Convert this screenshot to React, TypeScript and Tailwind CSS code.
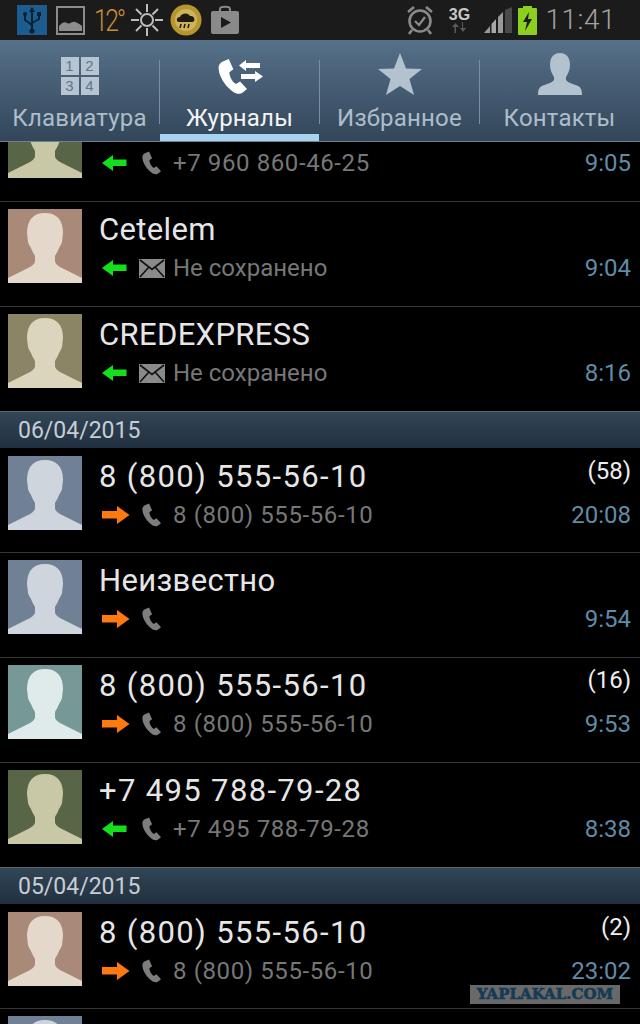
const font = "font-['Roboto',sans-serif]";

function PhoneIcon({ className, fill }: { className: string; fill: string }) {
  return (
    <svg viewBox="0 0 20 24" className={className}>
      <path
        fill={fill}
        d="M3 1.8 L7.4 0 L10.6 7 L7.8 9 C8 12.4 9.8 15.4 12.4 17.2 L15.2 15.4 L20 20.6 L16.6 23.4 C14.6 24.6 11.8 23.8 9.2 21.6 C4.6 17.8 0.8 12 0.4 6.6 C0.2 4.4 1.2 2.8 3 1.8 Z"
      />
    </svg>
  );
}

function Mail() {
  return (
    <svg viewBox="0 0 26 19" className="w-[26px] h-[19px]">
      <rect width="26" height="19" fill="#8a8a8a" />
      <path d="M1 1 L13 10.5 L25 1 M1 18 L9.5 8.5 M25 18 L16.5 8.5" stroke="#111" strokeWidth="1.6" fill="none" />
    </svg>
  );
}

function ArrowLeft() {
  return (
    <svg viewBox="0 0 26 16" className="w-[26px] h-[16px]">
      <path d="M0 8 L11 0 L11 4.5 L24.5 4.5 L24.5 11 L11 11 L11 16 Z" fill="#13e01b" />
    </svg>
  );
}

function ArrowRight() {
  return (
    <svg viewBox="0 0 28 18" className="w-[28px] h-[18px]">
      <path d="M0 5 L15 5 L15 0 L27.5 9 L15 18 L15 12.5 L0 12.5 Z" fill="#ff7a0e" />
    </svg>
  );
}

function Avatar({ bg, fg }: { bg: string; fg: string }) {
  return (
    <div className="w-[74px] h-[74px] shrink-0" style={{ background: bg }}>
      <svg viewBox="0 0 74 74" className="w-full h-full">
        <path
          fill={fg}
          d="M37 4 C49 4 55 11 55 24 L54 33 C53 36 52 37 51 39 C50 42 48 45 47 47 L47 52 C47 55 50 57 56 60 L66 65 L74 69 L74 74 L0 74 L0 69 L8 65 L18 60 C24 57 27 55 27 52 L27 47 C26 45 24 42 23 39 C22 37 21 36 20 33 L19 24 C19 11 25 4 37 4 Z"
        />
      </svg>
    </div>
  );
}

const avatars = {
  green: { bg: "#596547", fg: "#c8c8a6" },
  rose: { bg: "#a98a78", fg: "#e4d8ca" },
  olive: { bg: "#8b8465", fg: "#dcd5bd" },
  blue: { bg: "#708195", fg: "#ced5dd" },
  teal: { bg: "#769896", fg: "#dfeaea" },
};

interface ICall {
  avatar: keyof typeof avatars;
  title?: string;
  dir: "in" | "out";
  kind: "call" | "sms";
  sub?: string;
  count?: string;
  time: string;
  first?: boolean;
  last?: boolean;
}

// the phone's font has wider digits than Roboto
const isNumber = (s?: string) => /^[\d+]/.test(s ?? "");

function CallRow({ avatar, title, dir, kind, sub, count, time, first, last }: ICall) {
  return (
    <div
      className={`flex pl-2 pr-[9px] ${first ? "pt-2" : "pt-[7px]"} ${
        last ? "h-[104px]" : "h-[105px] border-b border-[#383838]"
      }`}
    >
      <Avatar {...avatars[avatar]} />
      <div className="ml-[18px] flex-1">
        <div
          className={`h-10 pt-px -ml-px leading-10 text-[31px] text-[#e6e6e6] ${
            isNumber(title) ? "tracking-[1.35px]" : "tracking-[0.35px]"
          }`}
        >
          {title}
        </div>
        <div className="h-9 mt-px flex items-center text-[24px] text-[#777]">
          <div className="w-[43px] pl-[2px]">{dir === "in" ? <ArrowLeft /> : <ArrowRight />}</div>
          {kind === "call" ? (
            <PhoneIcon className="w-[19px] h-6 -ml-px mr-[12px]" fill="#7d7d7d" />
          ) : (
            <div className="ml-[-4px] mr-[8px]">
              <Mail />
            </div>
          )}
          <span className={isNumber(sub) ? "tracking-[0.6px]" : ""}>{sub}</span>
        </div>
      </div>
      <div className="text-right">
        <div className="h-8 leading-[30px] text-[24px] text-[#eee]">{count}</div>
        <div className="mt-[9px] h-9 leading-9 text-[24px] text-[#5f8ca6]">{time}</div>
      </div>
    </div>
  );
}

function DateHeader({ date }: { date: string }) {
  return (
    <div className="h-[37px] pl-[18px] border-t border-[#5d666e] bg-gradient-to-b from-[#324656] to-[#213040] text-[23px] leading-[37px] text-[#c6ced4]">
      {date}
    </div>
  );
}

function Tab({
  label,
  active,
  children,
}: {
  label: string;
  active?: boolean;
  children: React.ReactNode;
}) {
  return (
    <div className="relative w-[159px] h-full flex flex-col items-center">
      <div className="h-[63px] pt-[13px] flex items-start justify-center">{children}</div>
      <div
        className={`text-[24px] leading-[30px] tracking-[0.2px] whitespace-nowrap ${
          active ? "text-[#f4f4f4]" : "text-[#adbdca]"
        }`}
      >
        {label}
      </div>
      {active && <div className="absolute left-0 right-0 bottom-0 h-[7px] bg-[#a6d3f0]" />}
    </div>
  );
}

const Divider = () => <div className="w-px h-[64px] mt-5 bg-[#7a90a2]" />;

function StatusBar() {
  return (
    <div className="h-10 bg-[#1b1b1b] flex items-center pl-[17px] pr-[24px]">
      {/* usb */}
      <svg viewBox="0 0 30 30" className="w-[30px] h-[30px]">
        <rect width="30" height="30" fill="#1c5c8f" />
        <path d="M15 3 L15 27 M8 10 L8 15 L15 20 M22 10 L22 14 L15 18" stroke="#0b2233" strokeWidth="2" fill="none" />
        <path d="M15 2 L18 7 L12 7 Z" fill="#0b2233" />
        <circle cx="15" cy="26" r="2.6" fill="#0b2233" />
        <circle cx="8" cy="9" r="2" fill="#0b2233" />
        <rect x="20" y="7" width="4" height="4" fill="#0b2233" />
      </svg>
      {/* gallery */}
      <svg viewBox="0 0 29 29" className="w-[29px] h-[29px] ml-[9px]">
        <rect x="1" y="1" width="27" height="27" fill="none" stroke="#8c8c8c" strokeWidth="2" />
        <path d="M3 25 L3 20 C6 17 8 15 11 17 C14 19 16 15 19 16 C22 17 24 18 26 20 L26 25 Z" fill="#8c8c8c" />
      </svg>
      <span className="ml-[9px] w-[29px] text-[31px] leading-none font-light tracking-[-3px] text-[#c98f2e] scale-x-[0.8] origin-left whitespace-nowrap">
        12°
      </span>
      {/* sun */}
      <svg viewBox="0 0 32 32" className="w-8 h-8 ml-2">
        <circle cx="16" cy="16" r="6" fill="none" stroke="#bdbdbd" strokeWidth="2" />
        <path
          d="M0 16 H8 M24 16 H32 M16 0 V8 M16 24 V32 M5 5 L10.5 10.5 M21.5 21.5 L27 27 M27 5 L21.5 10.5 M10.5 21.5 L5 27"
          stroke="#bdbdbd"
          strokeWidth="2"
        />
      </svg>
      {/* weather */}
      <svg viewBox="0 0 32 32" className="w-8 h-8 ml-[7px]">
        <circle cx="16" cy="16" r="15.5" fill="#b8962f" />
        <circle cx="16" cy="16" r="11" fill="#cdb45a" />
        <path d="M9 18 C6 18 6 13 10 13 C11 9 18 8 20 12 C25 11 26 18 22 18 Z" fill="#1d1a10" />
        <path d="M11 20 L10 24 M15 20 L14 24 M19 20 L18 24" stroke="#1d1a10" strokeWidth="1.5" />
      </svg>
      {/* store */}
      <svg viewBox="0 0 28 30" className="w-7 h-[30px] ml-[9px]">
        <path d="M9 7 V4 C9 1 19 1 19 4 V7" fill="none" stroke="#8a8a8a" strokeWidth="2" />
        <rect y="6" width="28" height="23" rx="2" fill="#8a8a8a" />
        <path d="M10 12 L20 17.5 L10 23 Z" fill="#1b1b1b" />
      </svg>
      <div className="flex-1" />
      {/* alarm */}
      <svg viewBox="0 0 28 30" className="w-7 h-[30px]">
        <circle cx="14" cy="16" r="10.5" fill="none" stroke="#8a8a8a" strokeWidth="2.6" />
        <path d="M9 16 L13 20 L19 12" fill="none" stroke="#8a8a8a" strokeWidth="2.2" />
        <path d="M2 7 L8 2 M26 7 L20 2 M6 25 L3 29 M22 25 L25 29" stroke="#8a8a8a" strokeWidth="2.6" />
      </svg>
      <div className="w-[22px] ml-[14px] flex flex-col items-center">
        <span className="text-[16px] leading-[15px] font-bold text-[#c8c8c8] font-['Liberation_Sans',sans-serif]">3G</span>
        <svg viewBox="0 0 16 11" className="w-4 h-[11px]">
          <path d="M4 11 V5 H1 L4 1 L7 5 H5 V11 Z M11 0 V6 H8 L11.5 10 L15 6 H12.5 V0 Z" fill="#5a5a5a" transform="rotate(180 8 5.5)" />
        </svg>
      </div>
      {/* signal */}
      <svg viewBox="0 0 28 26" className="w-7 h-[26px] ml-[14px]">
        <path d="M0 26 L6 19 V26 Z" fill="#9a9a9a" />
        <path d="M7.5 26 V17 L12 12 V26 Z" fill="#a8a8a8" />
        <path d="M14 26 V10 L19 5 V26 Z" fill="#9a9a9a" />
        <path d="M21 26 V3 L28 0 V26 Z" fill="#4a4a4a" />
      </svg>
      {/* battery */}
      <svg viewBox="0 0 19 29" className="w-[19px] h-[29px] ml-[6px]">
        <rect x="5" y="0" width="9" height="3" fill="#8ccf1c" />
        <rect y="2" width="19" height="27" rx="1" fill="#8ccf1c" />
        <path d="M11 6 L5 16 H9 L7 25 L14 13 H10 Z" fill="#1b1b1b" />
      </svg>
      <span className="ml-2 text-[28px] leading-none font-light tracking-[0.5px] text-[#a3a3a3]">11:41</span>
    </div>
  );
}

function TabBar() {
  return (
    <div className="h-[102px] flex bg-gradient-to-b from-[#567189] to-[#33465a] border-b border-[#6e8192]">
      <Tab label="Клавиатура">
        <div className="grid grid-cols-2 gap-[2px] w-[38px] mt-[4px] text-[15px] leading-[18px] text-center text-[#627789] font-['Liberation_Sans',sans-serif]">
          {[1, 2, 3, 4].map((n) => (
            <div key={n} className="h-[18px] bg-[#b6c5d1]">
              {n}
            </div>
          ))}
        </div>
      </Tab>
      <Divider />
      <Tab label="Журналы" active>
        <div className="relative w-[44px] h-[43px] mt-[2px]">
          <PhoneIcon className="w-[29px] h-[43px]" fill="#ffffff" />
          <svg viewBox="0 0 24 24" className="absolute left-[21px] top-[5px] w-6 h-6">
            <path d="M0 5.5 L7 0 V3 H21 V8 H7 V11 Z M2 14 H16 V11 L24 16.5 L16 22 V19 H2 Z" fill="#ffffff" />
          </svg>
        </div>
      </Tab>
      <Divider />
      <Tab label="Избранное">
        <svg viewBox="0 0 44 42" className="w-[44px] h-[42px]">
          <path d="M22 0 L28 15.5 L44 16 L31.5 26 L36 42 L22 33 L8 42 L12.5 26 L0 16 L16 15.5 Z" fill="#b2c2cf" />
        </svg>
      </Tab>
      <Divider />
      <Tab label="Контакты">
        <svg viewBox="0 0 44 42" className="w-[44px] h-[42px]">
          <path
            d="M22 0 C29 0 32 5 32 12 C32 17 30 21 28 24 L28 27 C30 30 36 31 40 33 C43 34.5 44 37 44 42 L0 42 C0 37 1 34.5 4 33 C8 31 14 30 16 27 L16 24 C14 21 12 17 12 12 C12 5 15 0 22 0 Z"
            fill="#b2c2cf"
          />
        </svg>
      </Tab>
    </div>
  );
}

const today: ICall[] = [
  { avatar: "green", dir: "in", kind: "call", sub: "+7 960 860-46-25", time: "9:05" },
  { avatar: "rose", title: "Cetelem", dir: "in", kind: "sms", sub: "Не сохранено", time: "9:04" },
  { avatar: "olive", title: "CREDEXPRESS", dir: "in", kind: "sms", sub: "Не сохранено", time: "8:16", last: true },
];

const april6: ICall[] = [
  { avatar: "blue", title: "8 (800) 555-56-10", dir: "out", kind: "call", sub: "8 (800) 555-56-10", count: "(58)", time: "20:08", first: true },
  { avatar: "blue", title: "Неизвестно", dir: "out", kind: "call", time: "9:54" },
  { avatar: "teal", title: "8 (800) 555-56-10", dir: "out", kind: "call", sub: "8 (800) 555-56-10", count: "(16)", time: "9:53" },
  { avatar: "green", title: "+7 495 788-79-28", dir: "in", kind: "call", sub: "+7 495 788-79-28", time: "8:38", last: true },
];

const april5: ICall[] = [
  { avatar: "rose", title: "8 (800) 555-56-10", dir: "out", kind: "call", sub: "8 (800) 555-56-10", count: "(2)", time: "23:02", first: true },
  { avatar: "blue", dir: "out", kind: "call", time: "" },
];

export default function App() {
  return (
    <div className={`relative w-[640px] h-[1024px] overflow-hidden bg-black ${font}`}>
      <StatusBar />
      <TabBar />
      <div className="h-[882px] overflow-hidden">
        <div className="mt-[-45px]">
          {today.map((c, i) => (
            <CallRow key={i} {...c} />
          ))}
          <DateHeader date="06/04/2015" />
          {april6.map((c, i) => (
            <CallRow key={i} {...c} />
          ))}
          <DateHeader date="05/04/2015" />
          {april5.map((c, i) => (
            <CallRow key={i} {...c} />
          ))}
        </div>
      </div>
      <div className="absolute left-[470px] top-[985px] w-[150px] h-[19px] bg-[#696969] text-center text-[15px] leading-[19px] font-bold text-[#163a54] [-webkit-text-stroke:0.6px_#163a54] font-['DejaVu_Serif',serif] whitespace-nowrap">
        YAPLAKAL.COM
      </div>
    </div>
  );
}
